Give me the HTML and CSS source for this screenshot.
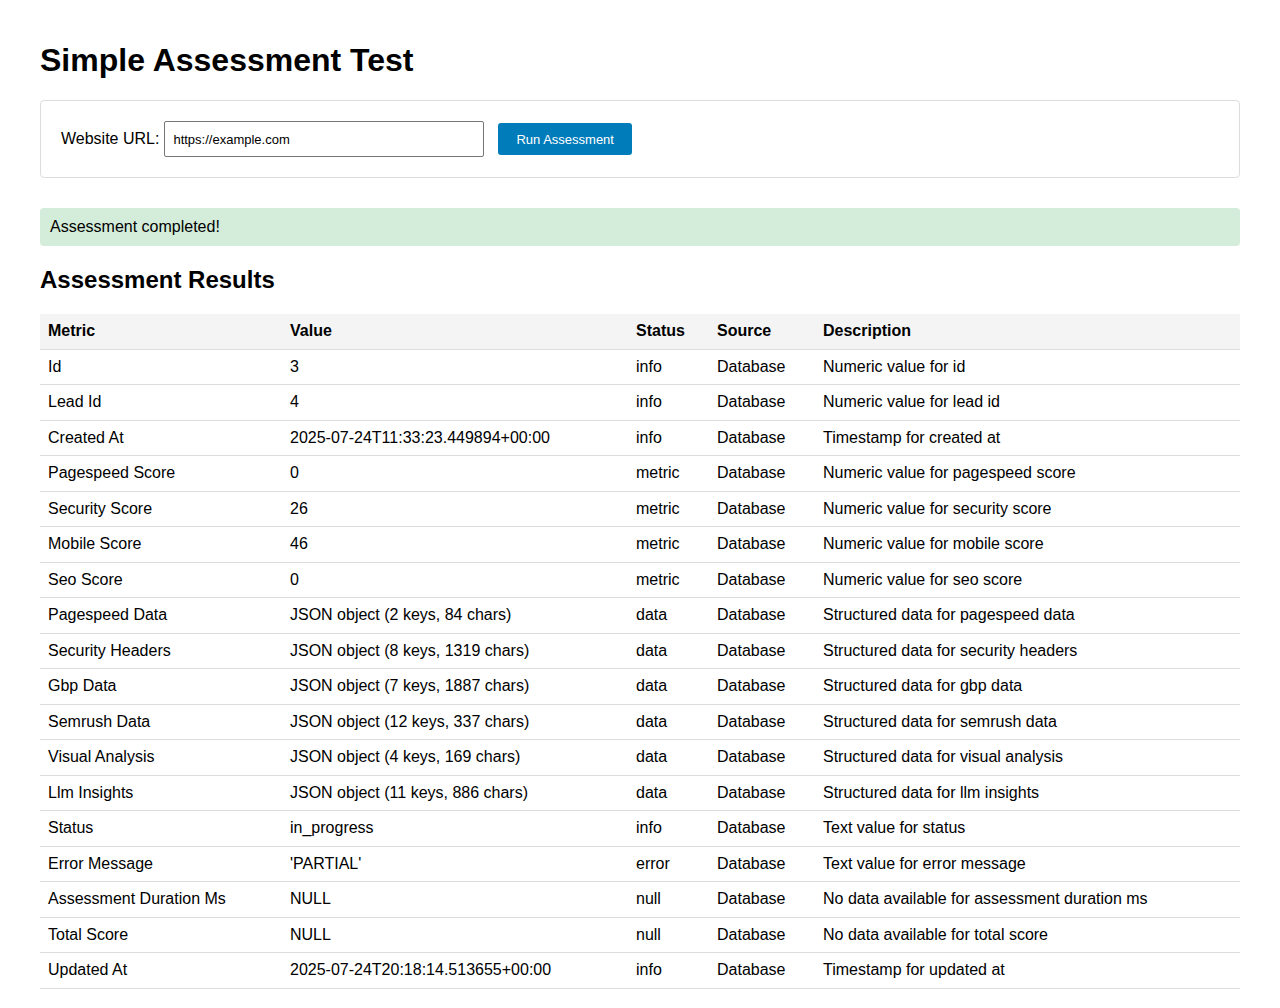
FILE: index.html
```html
<!DOCTYPE html>
<html>
<head>
<meta charset="utf-8">
<title>Simple Assessment Test</title>
<link rel="stylesheet" href="styles.css">
</head>
<body>
<div class="page">
  <h1 class="title">Simple Assessment Test</h1>
  <form class="form-box">
    <label class="label" for="url">Website URL:</label>
    <input class="url-input" id="url" type="text" value="https://example.com">
    <button class="run-btn" type="button">Run Assessment</button>
  </form>
  <div class="success">Assessment completed!</div>
  <h2 class="subtitle">Assessment Results</h2>
  <table class="results">
    <colgroup>
      <col class="c1"><col class="c2"><col class="c3"><col class="c4"><col class="c5">
    </colgroup>
    <thead>
      <tr><th>Metric</th><th>Value</th><th>Status</th><th>Source</th><th>Description</th></tr>
    </thead>
    <tbody>
      <tr><td>Id</td><td>3</td><td>info</td><td>Database</td><td>Numeric value for id</td></tr>
      <tr><td>Lead Id</td><td>4</td><td>info</td><td>Database</td><td>Numeric value for lead id</td></tr>
      <tr><td>Created At</td><td>2025-07-24T11:33:23.449894+00:00</td><td>info</td><td>Database</td><td>Timestamp for created at</td></tr>
      <tr><td>Pagespeed Score</td><td>0</td><td>metric</td><td>Database</td><td>Numeric value for pagespeed score</td></tr>
      <tr><td>Security Score</td><td>26</td><td>metric</td><td>Database</td><td>Numeric value for security score</td></tr>
      <tr><td>Mobile Score</td><td>46</td><td>metric</td><td>Database</td><td>Numeric value for mobile score</td></tr>
      <tr><td>Seo Score</td><td>0</td><td>metric</td><td>Database</td><td>Numeric value for seo score</td></tr>
      <tr><td>Pagespeed Data</td><td>JSON object (2 keys, 84 chars)</td><td>data</td><td>Database</td><td>Structured data for pagespeed data</td></tr>
      <tr><td>Security Headers</td><td>JSON object (8 keys, 1319 chars)</td><td>data</td><td>Database</td><td>Structured data for security headers</td></tr>
      <tr><td>Gbp Data</td><td>JSON object (7 keys, 1887 chars)</td><td>data</td><td>Database</td><td>Structured data for gbp data</td></tr>
      <tr><td>Semrush Data</td><td>JSON object (12 keys, 337 chars)</td><td>data</td><td>Database</td><td>Structured data for semrush data</td></tr>
      <tr><td>Visual Analysis</td><td>JSON object (4 keys, 169 chars)</td><td>data</td><td>Database</td><td>Structured data for visual analysis</td></tr>
      <tr><td>Llm Insights</td><td>JSON object (11 keys, 886 chars)</td><td>data</td><td>Database</td><td>Structured data for llm insights</td></tr>
      <tr><td>Status</td><td>in_progress</td><td>info</td><td>Database</td><td>Text value for status</td></tr>
      <tr><td>Error Message</td><td>'PARTIAL'</td><td>error</td><td>Database</td><td>Text value for error message</td></tr>
      <tr><td>Assessment Duration Ms</td><td>NULL</td><td>null</td><td>Database</td><td>No data available for assessment duration ms</td></tr>
      <tr><td>Total Score</td><td>NULL</td><td>null</td><td>Database</td><td>No data available for total score</td></tr>
      <tr><td>Updated At</td><td>2025-07-24T20:18:14.513655+00:00</td><td>info</td><td>Database</td><td>Timestamp for updated at</td></tr>
    </tbody>
  </table>
</div>
</body>
</html>
```

FILE: styles.css
```css
html, body {
  margin: 0;
  padding: 0;
  background: #fff;
}
body {
  font-family: "Liberation Sans", Arial, Helvetica, sans-serif;
  font-size: 16px;
  color: #000;
}
.page {
  max-width: 1200px;
  margin: 0 auto;
  padding: 21px 0 20px;
}
.title {
  font-size: 32px;
  font-weight: bold;
  margin: 21px 0 21px;
}
.form-box {
  border: 1px solid #ddd;
  border-radius: 4px;
  padding: 20px;
  margin: 0 0 30px;
  display: flex;
  align-items: center;
}
.label {
  font-size: 16px;
  margin-right: 5px;
}
.url-input {
  width: 320px;
  height: 36px;
  box-sizing: border-box;
  padding: 8px;
  font-family: "Liberation Sans", Arial, sans-serif;
  font-size: 13px;
  border: 1px solid #767676;
  border-radius: 2px;
  color: #000;
}
.run-btn {
  margin-left: 14px;
  height: 32px;
  padding: 0 18px;
  background: #007cba;
  color: #fff;
  border: none;
  border-radius: 3px;
  font-family: "Liberation Sans", Arial, sans-serif;
  font-size: 13px;
}
.success {
  background: #d4edda;
  border-radius: 4px;
  padding: 10px;
  line-height: 18px;
}
.subtitle {
  font-size: 24px;
  font-weight: bold;
  margin: 20px 0 20px;
}
.results {
  width: 100%;
  border-collapse: collapse;
  table-layout: fixed;
}
.c1 { width: 242px; }
.c2 { width: 346px; }
.c3 { width: 81px; }
.c4 { width: 106px; }
.c5 { width: 425px; }
.results th,
.results td {
  text-align: left;
  padding: 8px;
  border-bottom: 1px solid #ddd;
  line-height: 18.5px;
  white-space: nowrap;
}
.results th {
  background: #f4f4f4;
  font-weight: bold;
}
```
